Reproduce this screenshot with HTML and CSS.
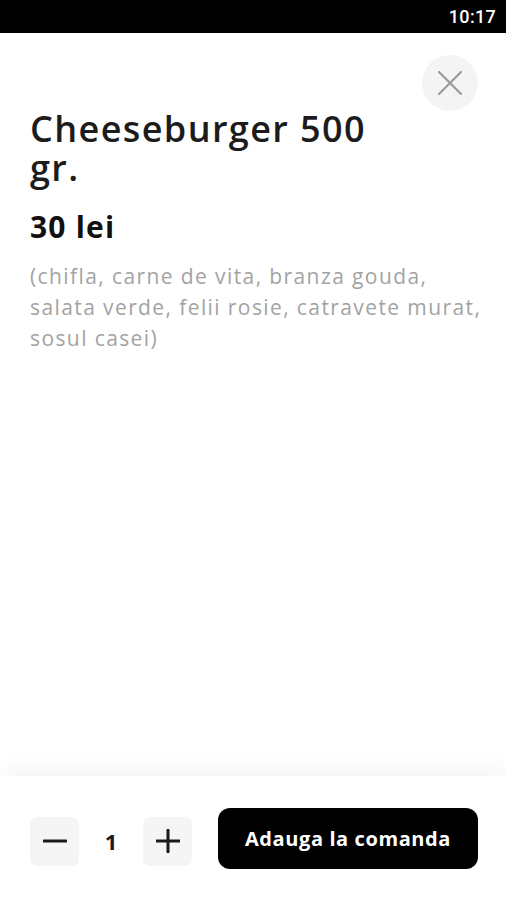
FILE: index.html
```html
<!DOCTYPE html>
<html lang="ro">
<head>
<meta charset="utf-8">
<title>Cheeseburger</title>
<link rel="stylesheet" href="styles.css">
</head>
<body>
<div class="screen">
  <div class="status-bar"><span class="time">10:17</span></div>
  <main class="content">
    <div class="close-row">
      <button class="close-btn" aria-label="Închide">
        <svg width="24" height="24" viewBox="0 0 24 24"><path d="M1 1L23 23M23 1L1 23" stroke="#9b9b9b" stroke-width="2.2" stroke-linecap="round" fill="none"/></svg>
      </button>
    </div>
    <h1 class="title">Cheeseburger 500 gr.</h1>
    <div class="price">30 lei</div>
    <p class="desc">(chifla, carne de vita, branza gouda, salata verde, felii rosie, catravete murat, sosul casei)</p>
  </main>
  <footer class="bottom-bar">
    <div class="qty">
      <button class="qty-btn" aria-label="Minus">
        <svg width="24" height="24" viewBox="0 0 24 24"><path d="M1 12H23" stroke="#1a1a1a" stroke-width="3" stroke-linecap="round"/></svg>
      </button>
      <span class="qty-value">1</span>
      <button class="qty-btn" aria-label="Plus">
        <svg width="24" height="24" viewBox="0 0 24 24"><path d="M1 12H23M12 1V23" stroke="#1a1a1a" stroke-width="3" stroke-linecap="round"/></svg>
      </button>
    </div>
    <button class="add-btn">Adauga la comanda</button>
  </footer>
</div>
</body>
</html>
```
FILE: styles.css
```css
* { box-sizing: border-box; }
html, body { margin: 0; padding: 0; background: #fff; }
body { font-family: "Open Sans", "Noto Sans", sans-serif; color: #1a1a1a; }
.screen { width: 506px; height: 900px; display: flex; flex-direction: column; overflow: hidden; }
.status-bar {
  height: 33px; background: #000; display: flex; align-items: center; justify-content: flex-end;
  padding: 0 10px 0 0; flex: none;
}
.time { color: #fff; font-family: "Roboto", sans-serif; font-weight: 500; font-size: 18px; letter-spacing: 0.3px; }
.content { flex: 1; padding: 22px 28px 0 30px; }
.close-row { display: flex; justify-content: flex-end; height: 54px; }
.close-btn {
  width: 56px; height: 56px; border-radius: 50%; border: none; background: #f4f4f4;
  display: flex; align-items: center; justify-content: center; padding: 0;
}
.title {
  margin: 0; padding-right: 80px; font-size: 36px; line-height: 39px; font-weight: 600; color: #1c1c1c;
  letter-spacing: 1.4px;
}
.price { margin-top: 23px; font-size: 30px; line-height: 34px; font-weight: 700; color: #111; letter-spacing: 1.2px; }
.desc { margin: 17px -12px 0 0; font-size: 21px; line-height: 31px; color: #a3a3a3; letter-spacing: 1.4px; }
.bottom-bar {
  flex: none; height: 124px; display: flex; align-items: center; justify-content: space-between;
  padding: 0 28px 0 30px; box-shadow: 0 -10px 18px rgba(0,0,0,0.035); background: #fff;
}
.qty { display: flex; align-items: center; margin-top: 6px; }
.qty-btn {
  width: 49px; height: 49px; border: none; border-radius: 7px; background: #f5f5f5;
  display: flex; align-items: center; justify-content: center; padding: 0;
}
.qty-value { width: 64px; text-align: center; font-size: 22px; font-weight: 700; color: #1a1a1a; }
.add-btn {
  width: 260px; height: 61px; border: none; border-radius: 12px; background: #000; color: #fff;
  font-family: "Open Sans", sans-serif; font-weight: 700; font-size: 20px; padding: 0; letter-spacing: 0.6px;
}
```
